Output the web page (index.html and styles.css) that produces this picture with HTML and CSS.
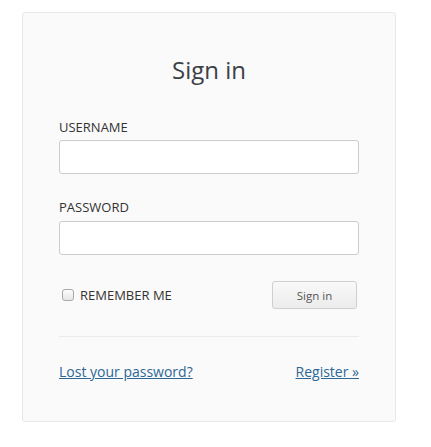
FILE: index.html
```html
<!DOCTYPE html>
<html>
<head>
<meta charset="utf-8">
<link rel="stylesheet" href="styles.css">
</head>
<body>
<div class="card">
  <h1 class="title">Sign in</h1>
  <form class="form">
    <label class="label">USERNAME</label>
    <input class="field" type="text">
    <label class="label label-pw">PASSWORD</label>
    <input class="field field-pw" type="password">
    <div class="row">
      <label class="remember"><span class="check"></span>REMEMBER ME</label>
      <button class="btn" type="button">Sign in</button>
    </div>
  </form>
  <div class="divider"></div>
  <div class="links">
    <a href="#" class="link">Lost your password?</a>
    <a href="#" class="link">Register »</a>
  </div>
</div>
</body>
</html>
```
FILE: styles.css
```css
html, body {
  margin: 0;
  padding: 0;
  background: #ffffff;
}
body {
  font-family: "Open Sans", "Liberation Sans", sans-serif;
  color: #333;
}
.card {
  box-sizing: border-box;
  margin: 12px 0 0 22px;
  width: 374px;
  height: 410px;
  background: #fafafa;
  border: 1px solid #e8e8e8;
  border-radius: 3px;
  padding: 40px 36px 0 36px;
}
.title {
  margin: 0;
  font-weight: 400;
  font-size: 24px;
  line-height: 33px;
  text-align: center;
  color: #3c4146;
}
.form {
  display: flex;
  flex-direction: column;
  margin-top: 32px;
}
.label {
  font-size: 13px;
  line-height: 18px;
  color: #333;
}
.label-pw {
  margin-top: 24px;
}
.field {
  box-sizing: border-box;
  margin: 4px 0 0 0;
  height: 34px;
  width: 100%;
  background: #fff;
  border: 1px solid #ccc;
  border-radius: 3px;
}
.field-pw {
  margin-top: 5px;
}
.row {
  display: flex;
  align-items: center;
  justify-content: space-between;
  margin-top: 26px;
}
.remember {
  display: flex;
  align-items: center;
  font-size: 13px;
  line-height: 18px;
  color: #333;
  padding-left: 3px;
}
.check {
  box-sizing: border-box;
  width: 12px;
  height: 12px;
  border: 1px solid #a9a9a9;
  border-radius: 3px;
  background: linear-gradient(#fdfdfd, #e6e6e6);
  margin-right: 6px;
}
.btn {
  box-sizing: border-box;
  width: 85px;
  height: 28px;
  margin-right: 2px;
  font-family: "Open Sans", "Liberation Sans", sans-serif;
  font-size: 11.5px;
  color: #555;
  background: linear-gradient(#f9f9f9, #ececec);
  border: 1px solid #cfcfcf;
  border-radius: 3px;
  padding: 0;
}
.divider {
  margin-top: 27px;
  border-top: 1px solid #ebebeb;
}
.links {
  display: flex;
  justify-content: space-between;
  margin-top: 25px;
}
.link {
  font-size: 14px;
  line-height: 19px;
  color: #2d6796;
  text-decoration: underline;
}
```
